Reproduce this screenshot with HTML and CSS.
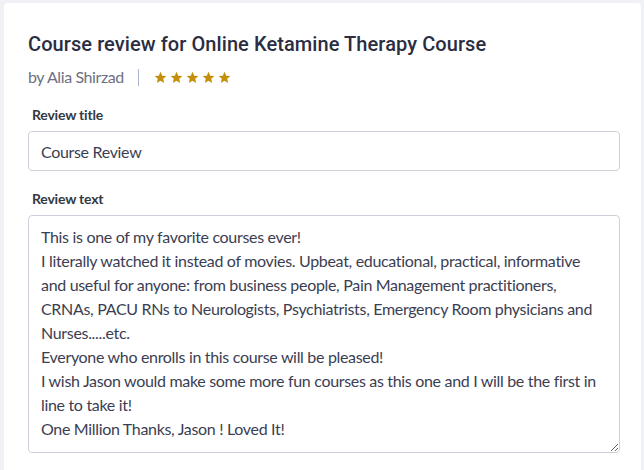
FILE: index.html
```html
<!DOCTYPE html>
<html>
<head>
<meta charset="utf-8">
<link rel="stylesheet" href="styles.css">
</head>
<body>
<div class="card">
  <h1 class="title">Course review for Online Ketamine Therapy Course</h1>
  <div class="meta">
    <span class="author">by Alia Shirzad</span>
    <span class="sep"></span>
    <span class="stars">
      <svg viewBox="0 0 24 24"><path d="M12 1.5l3.1 7.1 7.7.7-5.8 5.1 1.7 7.6L12 18.1 5.3 22l1.7-7.6L1.2 9.3l7.7-.7z"/></svg>
      <svg viewBox="0 0 24 24"><path d="M12 1.5l3.1 7.1 7.7.7-5.8 5.1 1.7 7.6L12 18.1 5.3 22l1.7-7.6L1.2 9.3l7.7-.7z"/></svg>
      <svg viewBox="0 0 24 24"><path d="M12 1.5l3.1 7.1 7.7.7-5.8 5.1 1.7 7.6L12 18.1 5.3 22l1.7-7.6L1.2 9.3l7.7-.7z"/></svg>
      <svg viewBox="0 0 24 24"><path d="M12 1.5l3.1 7.1 7.7.7-5.8 5.1 1.7 7.6L12 18.1 5.3 22l1.7-7.6L1.2 9.3l7.7-.7z"/></svg>
      <svg viewBox="0 0 24 24"><path d="M12 1.5l3.1 7.1 7.7.7-5.8 5.1 1.7 7.6L12 18.1 5.3 22l1.7-7.6L1.2 9.3l7.7-.7z"/></svg>
    </span>
  </div>
  <label class="label" for="rt">Review title</label>
  <input class="input" id="rt" type="text" value="Course Review">
  <label class="label label-text" for="rx">Review text</label>
  <textarea class="textarea" id="rx">This is one of my favorite courses ever!
I literally watched it instead of movies. Upbeat, educational, practical, informative and useful for anyone: from business people, Pain Management practitioners, CRNAs, PACU RNs to Neurologists, Psychiatrists, Emergency Room physicians and Nurses.....etc.
Everyone who enrolls in this course will be pleased!
I wish Jason would make some more fun courses as this one and I will be the first in line to take it!
One Million Thanks, Jason ! Loved It!</textarea>
</div>
</body>
</html>
```
FILE: styles.css
```css
html, body {
  margin: 0;
  padding: 0;
}
body {
  background: #f0f1f4;
  font-family: "Lato", "Liberation Sans", sans-serif;
  height: 470px;
  overflow: hidden;
}
.card {
  background: #fff;
  margin: 3px 3px 0 4px;
  border-radius: 4px;
  padding: 27px 24px 40px 24px;
  display: flex;
  flex-direction: column;
  align-items: flex-start;
}
.title {
  margin: 0;
  font-family: "Roboto", sans-serif;
  font-weight: 500;
  font-size: 20px;
  line-height: 28px;
  letter-spacing: 0.08px;
  color: #2b2d42;
}
.meta {
  margin-top: 7px;
  display: flex;
  align-items: center;
  height: 24px;
}
.author {
  font-size: 16px;
  line-height: 24px;
  letter-spacing: -0.4px;
  color: #6d7081;
}
.sep {
  width: 1px;
  height: 17px;
  background: #a9b4cc;
  margin: 0 15px 0 14px;
}
.stars {
  display: flex;
  gap: 3px;
}
.stars svg {
  width: 13px;
  height: 13px;
  fill: #c4900c;
}
.label {
  margin-top: 16px;
  margin-left: 4px;
  font-size: 14px;
  font-weight: 700;
  line-height: 20px;
  letter-spacing: -0.2px;
  color: #333a44;
}
.label-text {
  margin-top: 18px;
}
.input, .textarea {
  box-sizing: border-box;
  width: 592px;
  margin-top: 6px;
  border: 1px solid #cfd1da;
  border-radius: 4px;
  font-family: "Lato", "Liberation Sans", sans-serif;
  font-size: 16px;
  letter-spacing: -0.32px;
  color: #3b3e52;
  background: #fff;
  outline: none;
}
.input {
  height: 40px;
  padding: 0 12px;
}
.textarea {
  height: 238px;
  padding: 9px 12px 10px 12px;
  line-height: 24px;
  resize: vertical;
}
```
